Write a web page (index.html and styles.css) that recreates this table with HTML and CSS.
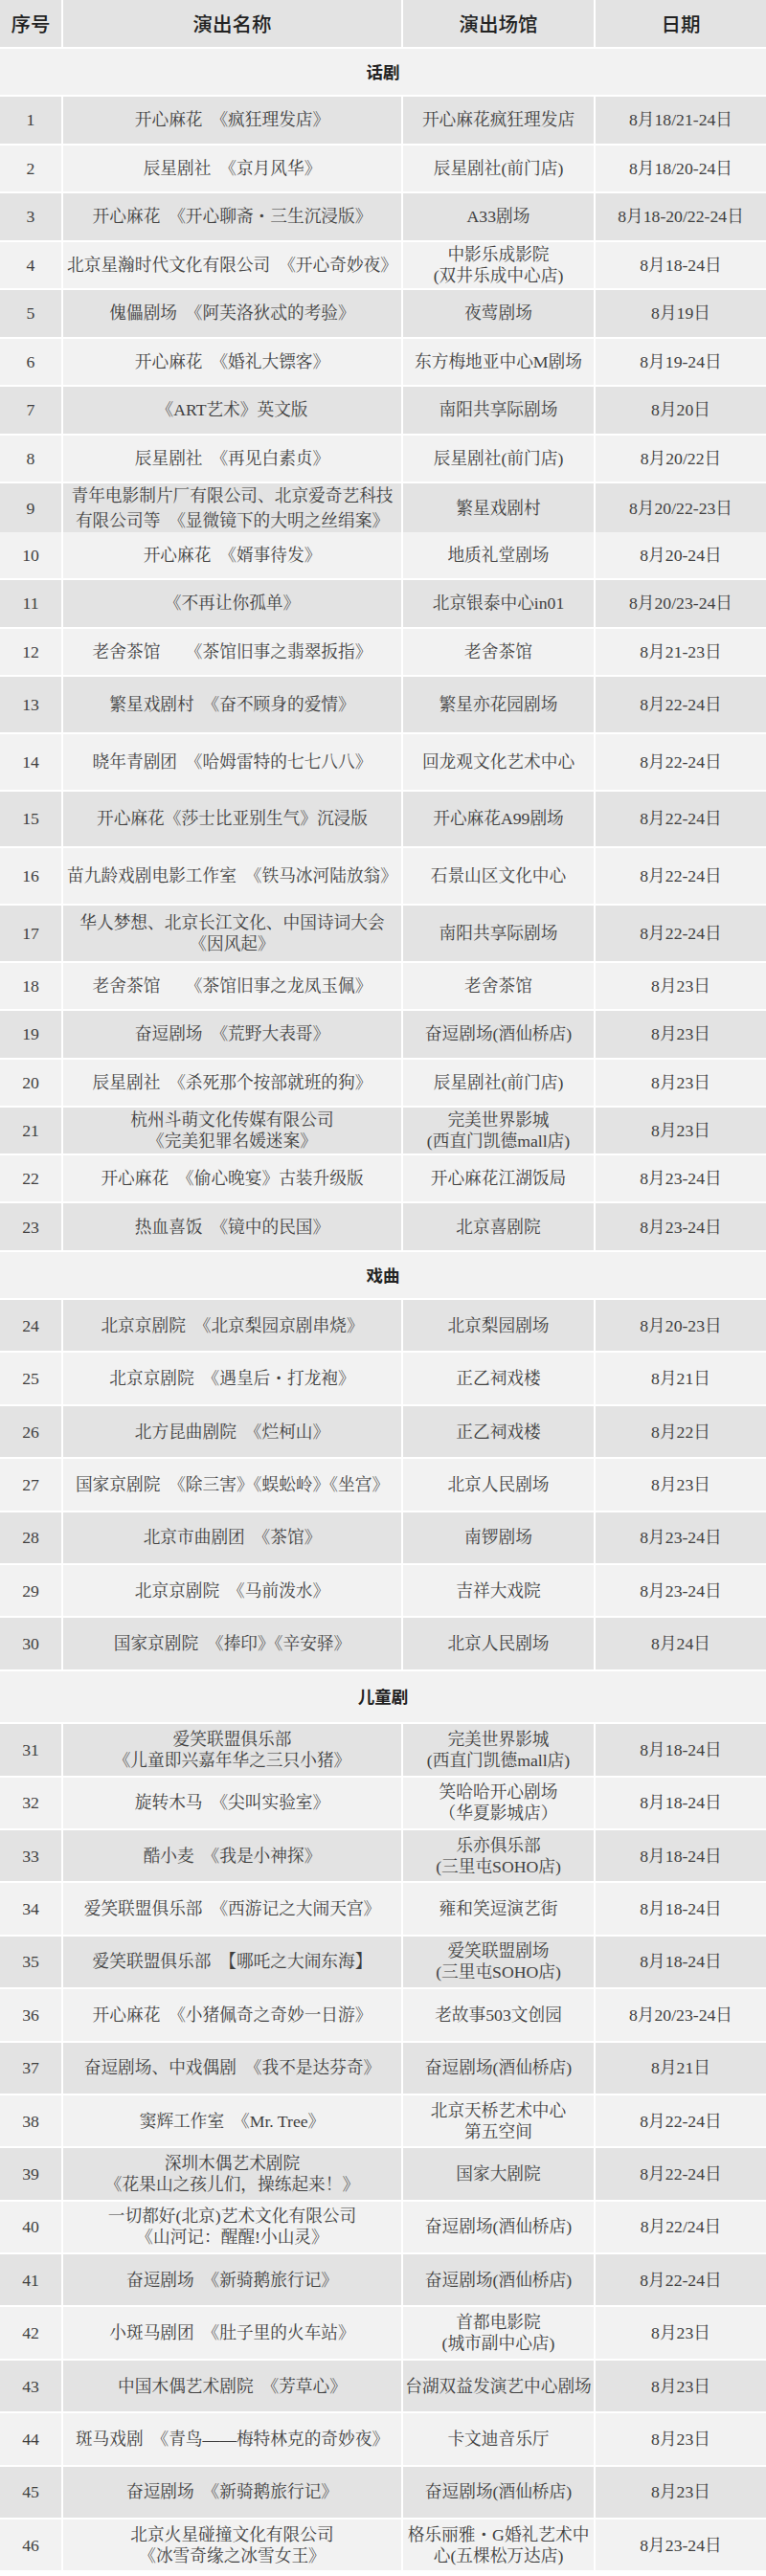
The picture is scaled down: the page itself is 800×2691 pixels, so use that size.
FILE: index.html
```html
<!DOCTYPE html>
<html lang="zh-CN">
<head>
<meta charset="utf-8">
<title>演出信息</title>
<link rel="stylesheet" href="styles.css">
</head>
<body>
<div class="sheet">
  <div class="row head h-a"><div class="c">序号</div><div class="c">演出名称</div><div class="c">演出场馆</div><div class="c">日期</div></div>

  <div class="row section h-a"><div class="c">话剧</div></div>
  <div class="row dark h-a"><div class="c">1</div><div class="c">开心麻花　《疯狂理发店》</div><div class="c">开心麻花疯狂理发店</div><div class="c">8月18/21-24日</div></div>
  <div class="row light h-a"><div class="c">2</div><div class="c">辰星剧社　《京月风华》</div><div class="c">辰星剧社(前门店)</div><div class="c">8月18/20-24日</div></div>
  <div class="row dark h-a"><div class="c">3</div><div class="c">开心麻花　《开心聊斋・三生沉浸版》</div><div class="c">A33剧场</div><div class="c">8月18-20/22-24日</div></div>
  <div class="row light h-a"><div class="c">4</div><div class="c">北京星瀚时代文化有限公司　《开心奇妙夜》</div><div class="c">中影乐成影院<br>(双井乐成中心店)</div><div class="c">8月18-24日</div></div>
  <div class="row dark h-a"><div class="c">5</div><div class="c">傀儡剧场　《阿芙洛狄忒的考验》</div><div class="c">夜莺剧场</div><div class="c">8月19日</div></div>
  <div class="row light h-a"><div class="c">6</div><div class="c">开心麻花　《婚礼大镖客》</div><div class="c">东方梅地亚中心M剧场</div><div class="c">8月19-24日</div></div>
  <div class="row dark h-a"><div class="c">7</div><div class="c">《ART艺术》英文版</div><div class="c">南阳共享际剧场</div><div class="c">8月20日</div></div>
  <div class="row light h-a"><div class="c">8</div><div class="c">辰星剧社　《再见白素贞》</div><div class="c">辰星剧社(前门店)</div><div class="c">8月20/22日</div></div>
  <div class="row dark h-a"><div class="c">9</div><div class="c wide-lines">青年电影制片厂有限公司、北京爱奇艺科技<br>有限公司等　《显微镜下的大明之丝绢案》</div><div class="c">繁星戏剧村</div><div class="c">8月20/22-23日</div></div>
  <div class="row light h-a"><div class="c">10</div><div class="c">开心麻花　《婿事待发》</div><div class="c">地质礼堂剧场</div><div class="c">8月20-24日</div></div>
  <div class="row dark h-a"><div class="c">11</div><div class="c">《不再让你孤单》</div><div class="c">北京银泰中心in01</div><div class="c">8月20/23-24日</div></div>
  <div class="row light h-a"><div class="c">12</div><div class="c">老舍茶馆　　《茶馆旧事之翡翠扳指》</div><div class="c">老舍茶馆</div><div class="c">8月21-23日</div></div>
  <div class="row dark h-b"><div class="c">13</div><div class="c">繁星戏剧村　《奋不顾身的爱情》</div><div class="c">繁星亦花园剧场</div><div class="c">8月22-24日</div></div>
  <div class="row light h-b"><div class="c">14</div><div class="c">晓年青剧团　《哈姆雷特的七七八八》</div><div class="c">回龙观文化艺术中心</div><div class="c">8月22-24日</div></div>
  <div class="row dark h-b"><div class="c">15</div><div class="c">开心麻花《莎士比亚别生气》沉浸版</div><div class="c">开心麻花A99剧场</div><div class="c">8月22-24日</div></div>
  <div class="row light h-b"><div class="c">16</div><div class="c">苗九龄戏剧电影工作室　《铁马冰河陆放翁》</div><div class="c">石景山区文化中心</div><div class="c">8月22-24日</div></div>
  <div class="row dark h-b"><div class="c">17</div><div class="c">华人梦想、北京长江文化、中国诗词大会<br>《因风起》</div><div class="c">南阳共享际剧场</div><div class="c">8月22-24日</div></div>
  <div class="row light h-c"><div class="c">18</div><div class="c">老舍茶馆　　《茶馆旧事之龙凤玉佩》</div><div class="c">老舍茶馆</div><div class="c">8月23日</div></div>
  <div class="row dark h-c"><div class="c">19</div><div class="c">奋逗剧场　《荒野大表哥》</div><div class="c">奋逗剧场(酒仙桥店)</div><div class="c">8月23日</div></div>
  <div class="row light h-c"><div class="c">20</div><div class="c">辰星剧社　《杀死那个按部就班的狗》</div><div class="c">辰星剧社(前门店)</div><div class="c">8月23日</div></div>
  <div class="row dark h-c"><div class="c">21</div><div class="c">杭州斗萌文化传媒有限公司<br>《完美犯罪名媛迷案》</div><div class="c">完美世界影城<br>(西直门凯德mall店)</div><div class="c">8月23日</div></div>
  <div class="row light h-c"><div class="c">22</div><div class="c">开心麻花　《偷心晚宴》古装升级版</div><div class="c">开心麻花江湖饭局</div><div class="c">8月23-24日</div></div>
  <div class="row dark h-c"><div class="c">23</div><div class="c">热血喜饭　《镜中的民国》</div><div class="c">北京喜剧院</div><div class="c">8月23-24日</div></div>

  <div class="row section h-c"><div class="c">戏曲</div></div>
  <div class="row dark h-d"><div class="c">24</div><div class="c">北京京剧院　《北京梨园京剧串烧》</div><div class="c">北京梨园剧场</div><div class="c">8月20-23日</div></div>
  <div class="row light h-d"><div class="c">25</div><div class="c">北京京剧院　《遇皇后・打龙袍》</div><div class="c">正乙祠戏楼</div><div class="c">8月21日</div></div>
  <div class="row dark h-d"><div class="c">26</div><div class="c">北方昆曲剧院　《烂柯山》</div><div class="c">正乙祠戏楼</div><div class="c">8月22日</div></div>
  <div class="row light h-d"><div class="c">27</div><div class="c">国家京剧院　《除三害》《蜈蚣岭》《坐宫》</div><div class="c">北京人民剧场</div><div class="c">8月23日</div></div>
  <div class="row dark h-d"><div class="c">28</div><div class="c">北京市曲剧团　《茶馆》</div><div class="c">南锣剧场</div><div class="c">8月23-24日</div></div>
  <div class="row light h-d"><div class="c">29</div><div class="c">北京京剧院　《马前泼水》</div><div class="c">吉祥大戏院</div><div class="c">8月23-24日</div></div>
  <div class="row dark h-d"><div class="c">30</div><div class="c">国家京剧院　《捧印》《辛安驿》</div><div class="c">北京人民剧场</div><div class="c">8月24日</div></div>

  <div class="row section h-d"><div class="c">儿童剧</div></div>
  <div class="row dark h-d"><div class="c">31</div><div class="c">爱笑联盟俱乐部<br>《儿童即兴嘉年华之三只小猪》</div><div class="c">完美世界影城<br>(西直门凯德mall店)</div><div class="c">8月18-24日</div></div>
  <div class="row light h-d"><div class="c">32</div><div class="c">旋转木马　《尖叫实验室》</div><div class="c">笑哈哈开心剧场<br>（华夏影城店）</div><div class="c">8月18-24日</div></div>
  <div class="row dark h-d"><div class="c">33</div><div class="c">酷小麦　《我是小神探》</div><div class="c">乐亦俱乐部<br>(三里屯SOHO店)</div><div class="c">8月18-24日</div></div>
  <div class="row light h-d"><div class="c">34</div><div class="c">爱笑联盟俱乐部　《西游记之大闹天宫》</div><div class="c">雍和笑逗演艺街</div><div class="c">8月18-24日</div></div>
  <div class="row dark h-d"><div class="c">35</div><div class="c">爱笑联盟俱乐部　【哪吒之大闹东海】</div><div class="c">爱笑联盟剧场<br>(三里屯SOHO店)</div><div class="c">8月18-24日</div></div>
  <div class="row light h-d"><div class="c">36</div><div class="c">开心麻花　《小猪佩奇之奇妙一日游》</div><div class="c">老故事503文创园</div><div class="c">8月20/23-24日</div></div>
  <div class="row dark h-d"><div class="c">37</div><div class="c">奋逗剧场、中戏偶剧　《我不是达芬奇》</div><div class="c">奋逗剧场(酒仙桥店)</div><div class="c">8月21日</div></div>
  <div class="row light h-d"><div class="c">38</div><div class="c">窦辉工作室　《Mr. Tree》</div><div class="c">北京天桥艺术中心<br>第五空间</div><div class="c">8月22-24日</div></div>
  <div class="row dark h-d"><div class="c">39</div><div class="c">深圳木偶艺术剧院<br>《花果山之孩儿们，操练起来！》</div><div class="c">国家大剧院</div><div class="c">8月22-24日</div></div>
  <div class="row light h-d"><div class="c">40</div><div class="c">一切都好(北京)艺术文化有限公司<br>《山河记：醒醒!小山灵》</div><div class="c">奋逗剧场(酒仙桥店)</div><div class="c">8月22/24日</div></div>
  <div class="row dark h-d"><div class="c">41</div><div class="c">奋逗剧场　《新骑鹅旅行记》</div><div class="c">奋逗剧场(酒仙桥店)</div><div class="c">8月22-24日</div></div>
  <div class="row light h-d"><div class="c">42</div><div class="c">小斑马剧团　《肚子里的火车站》</div><div class="c">首都电影院<br>(城市副中心店)</div><div class="c">8月23日</div></div>
  <div class="row dark h-d"><div class="c">43</div><div class="c">中国木偶艺术剧院　《芳草心》</div><div class="c">台湖双益发演艺中心剧场</div><div class="c">8月23日</div></div>
  <div class="row light h-d"><div class="c">44</div><div class="c">斑马戏剧　《青鸟——梅特林克的奇妙夜》</div><div class="c">卡文迪音乐厅</div><div class="c">8月23日</div></div>
  <div class="row dark h-d"><div class="c">45</div><div class="c">奋逗剧场　《新骑鹅旅行记》</div><div class="c">奋逗剧场(酒仙桥店)</div><div class="c">8月23日</div></div>
  <div class="row light h-d"><div class="c">46</div><div class="c">北京火星碰撞文化有限公司<br>《冰雪奇缘之冰雪女王》</div><div class="c">格乐丽雅・G婚礼艺术中<br>心(五棵松万达店)</div><div class="c">8月23-24日</div></div>
</div>
</body>
</html>
```

FILE: styles.css
```css
html, body {
  margin: 0;
  padding: 0;
  background: #ffffff;
}

body {
  font-family: "Liberation Serif", "Noto Serif CJK SC", "Noto Sans CJK SC", serif;
  font-size: 17.7px;
  color: #404040;
}

.sheet {
  width: 800px;
  display: flex;
  flex-direction: column;
  gap: 2px;
}

.row {
  display: grid;
  grid-template-columns: 64px 353px 199px 178px;
  column-gap: 2px;
}

.row.section {
  grid-template-columns: 1fr;
}

.c {
  display: flex;
  align-items: center;
  justify-content: center;
  text-align: center;
  white-space: nowrap;
  line-height: 22px;
  min-width: 0;
}

.h-a { height: 48.5px; }
.h-b { height: 57.8px; }
.h-c { height: 48.3px; }
.h-d { height: 53.4px; }

.dark .c,
.head .c {
  background: #e3e3e3;
}

.light .c,
.section .c {
  background: #f2f2f2;
}

.head .c {
  font-family: "Noto Sans CJK SC", sans-serif;
  font-size: 20.5px;
  font-weight: 500;
  color: #222222;
}

.section .c {
  font-family: "Noto Sans CJK SC", sans-serif;
  font-size: 17.5px;
  font-weight: 700;
  color: #222222;
}

.wide-lines {
  line-height: 26px;
}
```
